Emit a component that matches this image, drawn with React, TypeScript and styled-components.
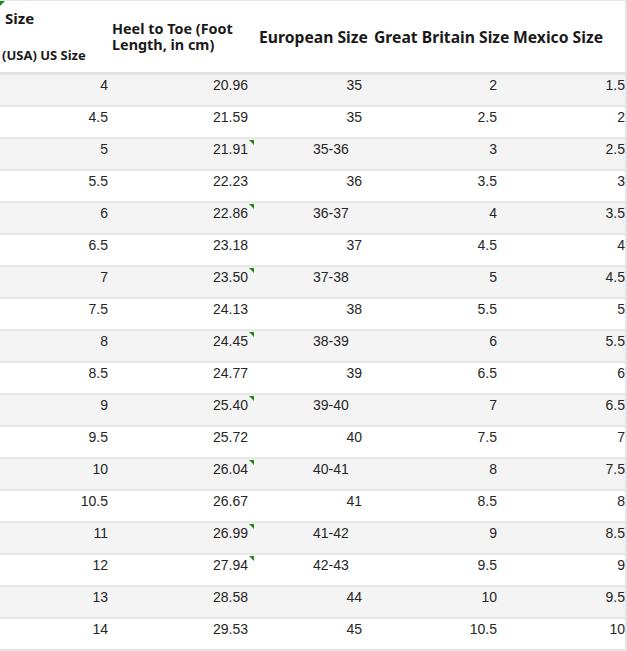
import React from "react";
import styled, { createGlobalStyle } from "styled-components";

const Global = createGlobalStyle`
  html, body { margin: 0; padding: 0; background: #fff; }
  body { font-family: "Liberation Sans", Arial, sans-serif; }
`;

const COLS = "110px 146px 116px 134px 119px";

const Table = styled.div`
  width: 625px;
  border-right: 2px solid #e3e3e3;
  border-top: 1px solid #e6e6e6;
  position: relative;
`;

const CornerMark = styled.span`
  position: absolute;
  left: 0;
  top: 0;
  width: 0;
  height: 0;
  border-top: 5px solid #1e8a1e;
  border-right: 5px solid transparent;
`;

const HeaderRow = styled.div`
  display: grid;
  grid-template-columns: ${COLS};
  height: 71px;
  border-bottom: 3px solid #e2e2e2;
  background: #fff;
  font-family: "Noto Sans", "Open Sans", sans-serif;
  font-weight: 700;
  color: #1a1a1a;
`;

const HeadCell = styled.div<{ $pl: number; $size?: number }>`
  display: flex;
  align-items: center;
  padding-left: ${(p) => p.$pl}px;
  padding-top: 1px;
  font-size: ${(p) => p.$size ?? 15.7}px;
  line-height: 16px;
  white-space: nowrap;
`;

const FirstHead = styled.div`
  display: flex;
  flex-direction: column;
  justify-content: space-between;
  padding: 9px 0 9px 2px;
`;

const HeadTop = styled.span`
  font-size: 15px;
  line-height: 17px;
  padding-left: 3px;
`;

const HeadSub = styled.span`
  font-size: 13px;
  line-height: 15px;
`;

const Row = styled.div<{ $shade: boolean }>`
  display: grid;
  grid-template-columns: ${COLS};
  height: 30px;
  border-bottom: 2px solid #e6e6e6;
  background: ${(p) => (p.$shade ? "#f4f4f4" : "#ffffff")};
  color: #262626;
  font-size: 14px;
  line-height: 21px;
`;

const Cell = styled.div<{ $align: "left" | "right"; $pad: number }>`
  position: relative;
  text-align: ${(p) => p.$align};
  padding-left: ${(p) => (p.$align === "left" ? p.$pad : 0)}px;
  padding-right: ${(p) => (p.$align === "right" ? p.$pad : 0)}px;
`;

const Flag = styled.span`
  position: absolute;
  top: 1px;
  right: 2px;
  width: 0;
  height: 0;
  border-top: 5px solid #1e8a1e;
  border-left: 5px solid transparent;
`;

type R = [string, string, string, string, string];

const rows: R[] = [
  ["4", "20.96", "35", "2", "1.5"],
  ["4.5", "21.59", "35", "2.5", "2"],
  ["5", "21.91", "35-36", "3", "2.5"],
  ["5.5", "22.23", "36", "3.5", "3"],
  ["6", "22.86", "36-37", "4", "3.5"],
  ["6.5", "23.18", "37", "4.5", "4"],
  ["7", "23.50", "37-38", "5", "4.5"],
  ["7.5", "24.13", "38", "5.5", "5"],
  ["8", "24.45", "38-39", "6", "5.5"],
  ["8.5", "24.77", "39", "6.5", "6"],
  ["9", "25.40", "39-40", "7", "6.5"],
  ["9.5", "25.72", "40", "7.5", "7"],
  ["10", "26.04", "40-41", "8", "7.5"],
  ["10.5", "26.67", "41", "8.5", "8"],
  ["11", "26.99", "41-42", "9", "8.5"],
  ["12", "27.94", "42-43", "9.5", "9"],
  ["13", "28.58", "44", "10", "9.5"],
  ["14", "29.53", "45", "10.5", "10"],
];

export default function App() {
  return (
    <>
      <Global />
      <Table>
        <CornerMark />
        <HeaderRow>
          <FirstHead>
            <HeadTop>Size</HeadTop>
            <HeadSub>(USA) US Size</HeadSub>
          </FirstHead>
          <HeadCell $pl={2} $size={14.4}>
            <span>
              Heel to Toe (Foot
              <br />
              Length, in cm)
            </span>
          </HeadCell>
          <HeadCell $pl={3}>European Size</HeadCell>
          <HeadCell $pl={2}>Great Britain Size</HeadCell>
          <HeadCell $pl={7}>Mexico Size</HeadCell>
        </HeaderRow>
        {rows.map((r, i) => {
          const range = r[2].includes("-");
          return (
            <Row key={r[0]} $shade={i % 2 === 0}>
              <Cell $align="right" $pad={2}>{r[0]}</Cell>
              <Cell $align="right" $pad={8}>
                {r[1]}
                {range && <Flag />}
              </Cell>
              <Cell $align={range ? "left" : "right"} $pad={range ? 57 : 10}>
                {r[2]}
              </Cell>
              <Cell $align="right" $pad={9}>{r[3]}</Cell>
              <Cell $align="right" $pad={0}>{r[4]}</Cell>
            </Row>
          );
        })}
      </Table>
    </>
  );
}
